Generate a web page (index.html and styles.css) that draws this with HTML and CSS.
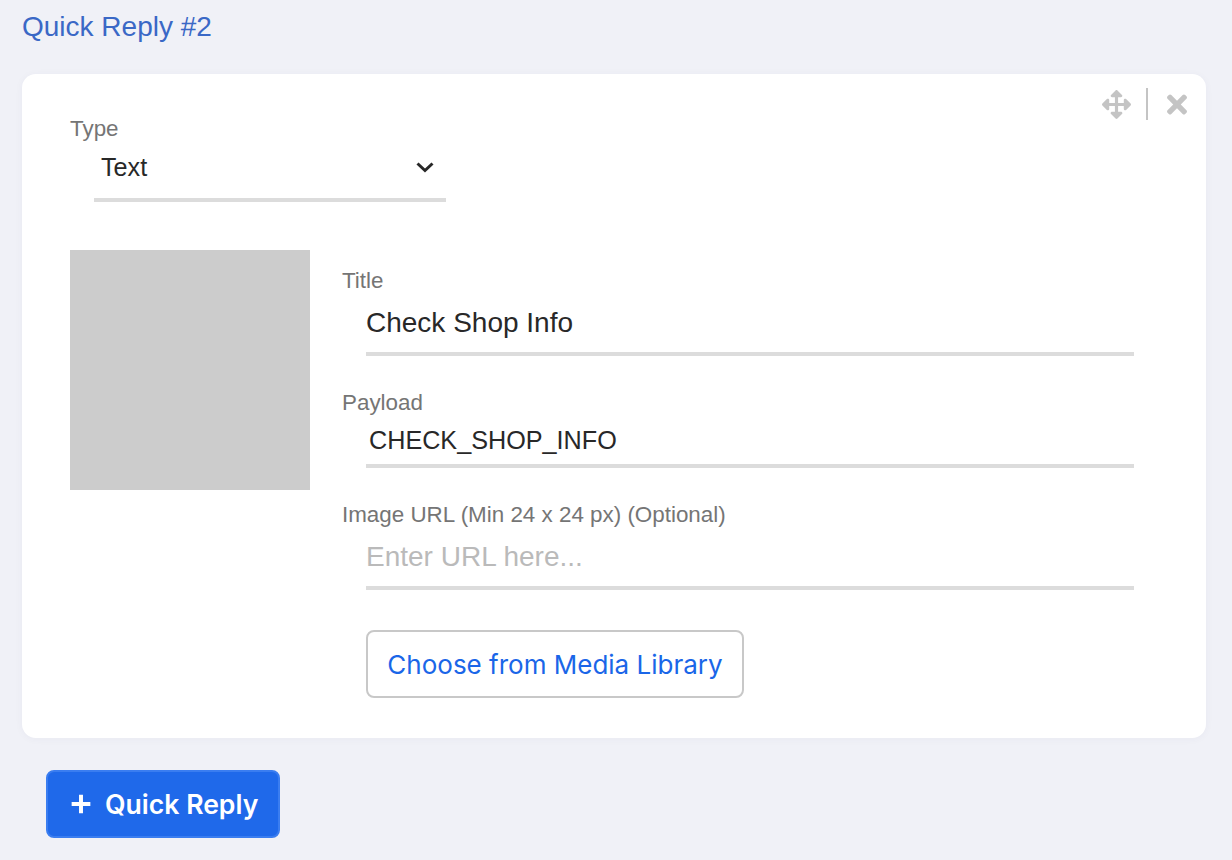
FILE: index.html
```html
<!DOCTYPE html>
<html lang="en">
<head>
<meta charset="utf-8">
<title>Quick Reply</title>
<link rel="stylesheet" href="styles.css">
</head>
<body>
<h2 class="heading">Quick Reply #2</h2>
<section class="card">
  <div class="tools">
    <svg class="tool-move" viewBox="0 0 512 512"><path d="M352.201 425.775l-79.196 79.196c-9.373 9.373-24.568 9.373-33.941 0l-79.196-79.196c-15.119-15.119-4.411-40.971 16.971-40.97h51.162L228 284H127.196v51.162c0 21.382-25.851 32.09-40.971 16.971L7.029 272.937c-9.373-9.373-9.373-24.569 0-33.941L86.225 159.8c15.119-15.119 40.971-4.411 40.971 16.971V228H228V127.196h-51.23c-21.382 0-32.09-25.851-16.971-40.971l79.196-79.196c9.373-9.373 24.568-9.373 33.941 0l79.196 79.196c15.119 15.119 4.411 40.971-16.971 40.971h-51.162V228h100.804v-51.162c0-21.382 25.851-32.09 40.97-16.971l79.196 79.196c9.373 9.373 9.373 24.569 0 33.941L425.773 352.2c-15.119 15.119-40.971 4.411-40.97-16.971V284H284v100.804h51.23c21.382 0 32.09 25.851 16.971 40.971z"/></svg>
    <span class="tool-sep"></span>
    <svg class="tool-close" viewBox="0 0 352 512"><path d="M242.72 256l100.07-100.07c12.28-12.28 12.28-32.19 0-44.48l-22.24-22.24c-12.28-12.28-32.19-12.28-44.48 0L176 189.28 75.93 89.21c-12.28-12.28-32.19-12.28-44.48 0L9.21 111.45c-12.28 12.28-12.28 32.19 0 44.48L109.28 256 9.21 356.07c-12.28 12.28-12.28 32.19 0 44.48l22.24 22.24c12.28 12.28 32.2 12.28 44.48 0L176 322.72l100.07 100.07c12.28 12.28 32.2 12.28 44.48 0l22.24-22.24c12.28-12.28 12.28-32.19 0-44.48L242.72 256z"/></svg>
  </div>

  <div class="type-field">
    <label class="label">Type</label>
    <div class="select">
      <span class="select-value">Text</span>
      <svg class="chevron" viewBox="0 0 20 12"><path d="M2.5 2.5L10 9.5L17.5 2.5"/></svg>
    </div>
  </div>

  <div class="body-row">
    <div class="thumb"></div>
    <div class="fields">
      <div class="field field-title">
        <label class="label">Title</label>
        <div class="control title-control">Check Shop Info</div>
      </div>
      <div class="field field-payload">
        <label class="label">Payload</label>
        <div class="control payload-control">CHECK_SHOP_INFO</div>
      </div>
      <div class="field field-url">
        <label class="label">Image URL (Min 24 x 24 px) (Optional)</label>
        <div class="control url-control">Enter URL here...</div>
      </div>
      <button class="media-btn">Choose from Media Library</button>
    </div>
  </div>
</section>
<button class="add-btn">
  <svg class="plus" viewBox="0 0 20 20"><path d="M10 1.5V18.5M1.5 10H18.5"/></svg>
  <span>Quick Reply</span>
</button>
</body>
</html>
```
FILE: styles.css
```css
* { box-sizing: border-box; }
html, body { height: 100%; }
body {
  margin: 0;
  padding: 0 26px 0 22px;
  background: #f0f1f7;
  font-family: "Liberation Sans", Arial, sans-serif;
  overflow: hidden;
}
.heading {
  margin: 0 0 32px;
  padding-top: 12px;
  height: 42px;
  font-size: 28px;
  line-height: 30px;
  font-weight: 400;
  color: #3a68c6;
}
.card {
  position: relative;
  height: 664px;
  padding: 40px 72px 0 48px;
  background: #fff;
  border-radius: 14px;
  box-shadow: 0 1px 8px rgba(60, 60, 90, 0.04);
}
.tools {
  position: absolute;
  top: 14px;
  right: 19px;
  display: flex;
  align-items: center;
  height: 32px;
}
.tool-move { width: 29px; height: 29px; fill: #c4c4c4; }
.tool-sep { width: 2px; height: 32px; margin: 0 19px 0 15px; background: #c4c4c4; }
.tool-close { width: 20px; height: 29px; fill: #c4c4c4; }
.label {
  display: block;
  font-size: 22.4px;
  line-height: 30px;
  color: #757575;
}
.type-field { width: 376px; }
.select {
  display: flex;
  align-items: center;
  justify-content: space-between;
  width: 352px;
  height: 58px;
  margin-left: 24px;
  padding: 0 11px 8px 7px;
  border-bottom: 4px solid #dcdcdc;
}
.select-value { font-size: 25.2px; color: #282828; }
.chevron { width: 20px; height: 12px; fill: none; stroke: #282828; stroke-width: 3; }
.body-row {
  display: flex;
  gap: 32px;
  margin-top: 48px;
}
.thumb { flex: none; width: 240px; height: 240px; background: #cccccc; }
.fields { flex: 1; padding-top: 16px; }
.control {
  margin-left: 24px;
  border-bottom: 4px solid #dcdcdc;
  color: #282828;
}
.field-title { height: 106px; }
.field-payload { height: 127px; padding-top: 16px; }
.field-url { padding-top: 1px; }
.title-control { height: 60px; font-size: 28px; line-height: 54px; }
.payload-control { height: 50px; padding-left: 3px; font-size: 25.2px; line-height: 44px; }
.url-control { height: 60px; font-size: 28px; line-height: 54px; color: #bababa; }
.media-btn {
  display: block;
  width: 378px;
  height: 68px;
  margin: 40px 0 0 24px;
  padding: 0;
  background: #fff;
  border: 2px solid #c8c8c8;
  border-radius: 8px;
  font-family: Inter, sans-serif;
  font-size: 26px;
  color: #1a66e8;
}
.add-btn {
  display: flex;
  align-items: center;
  gap: 13px;
  width: 234px;
  height: 68px;
  margin: 32px 0 0 24px;
  padding: 0 0 0 22px;
  background: #1f69ea;
  border: 2px solid #3a7df0;
  border-radius: 8px;
  font-family: Inter, sans-serif;
  font-size: 26.6px;
  font-weight: 600;
  color: #fff;
}
.plus { width: 22px; height: 22px; fill: none; stroke: #fff; stroke-width: 3.6; }
```
